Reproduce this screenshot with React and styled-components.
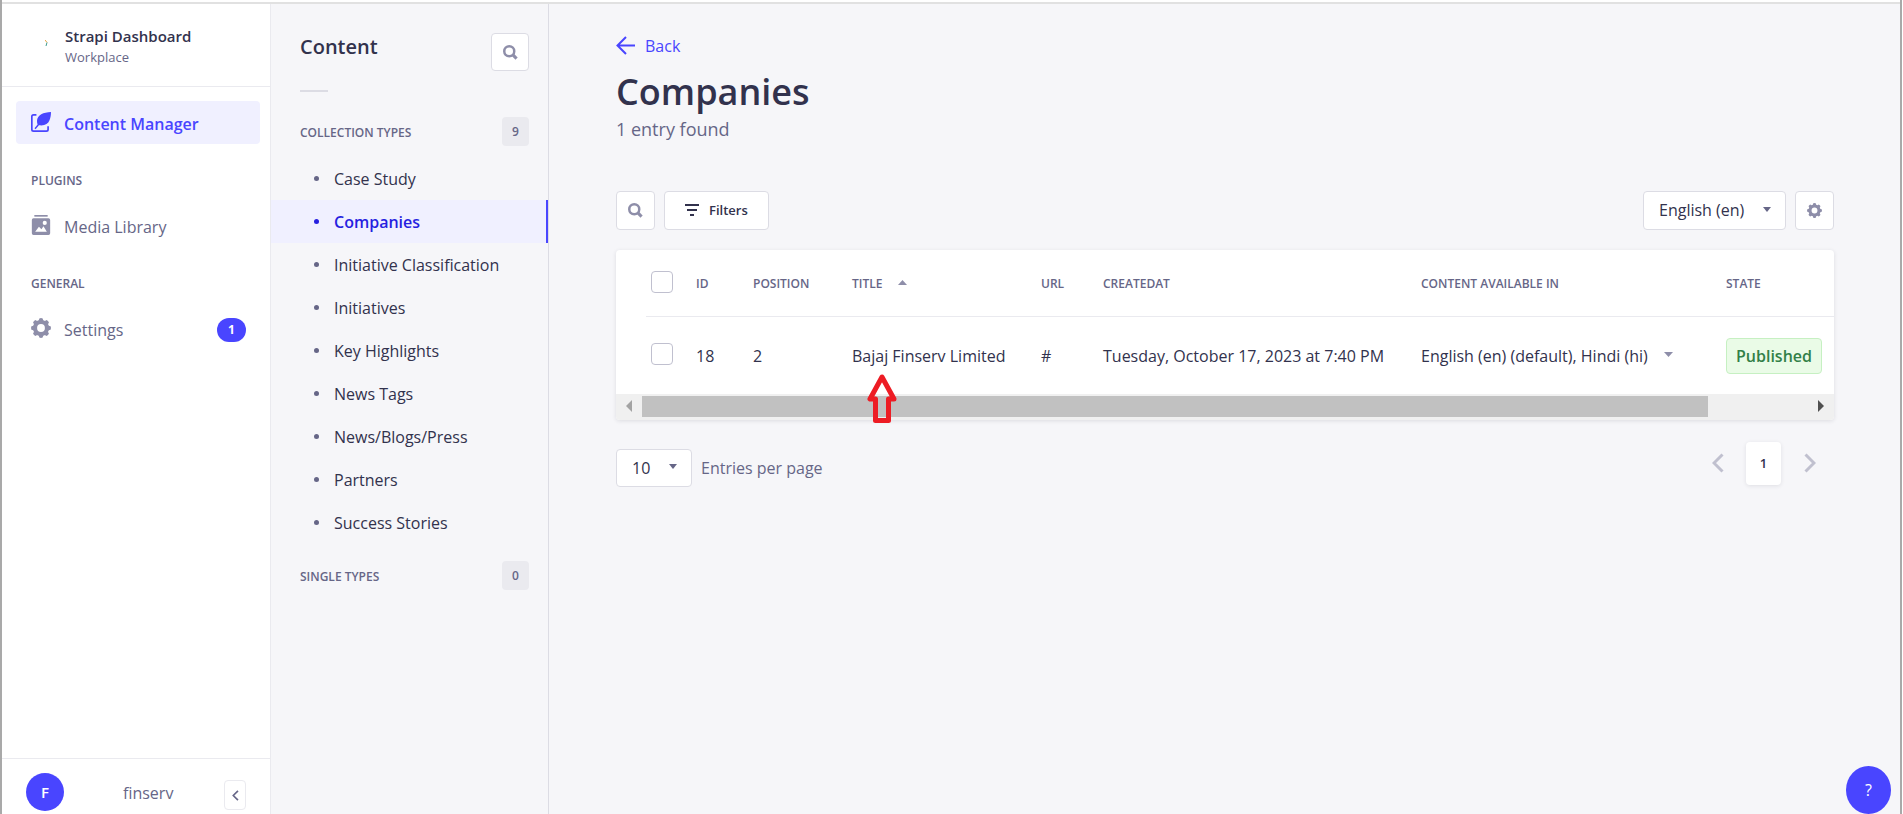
import React, { useRef } from 'react';
import styled, { createGlobalStyle } from 'styled-components';

const c = {
  primary: '#4945ff',
  primaryDark: '#271fe0',
  primaryLight: '#f0f0ff',
  ink: '#32324d',
  muted: '#666687',
  icon: '#8e8ea9',
  faint: '#c0c0cf',
  line: '#eaeaef',
  border: '#dcdce4',
  page: '#f6f6f9',
};

const GlobalStyle = createGlobalStyle`
  *, *::before, *::after { box-sizing: border-box; }
  body { margin: 0; background: #fff; }
  body, button, select, input {
    font-family: "Open Sans", "Noto Sans", sans-serif;
    font-size: 16px;
    color: ${c.ink};
  }
  h1, h2, h3, p, ul { margin: 0; padding: 0; }
  ul { list-style: none; }
  a { color: inherit; text-decoration: none; }
  button { cursor: pointer; padding: 0; }
  svg { display: block; flex: none; }
`;

const Window = styled.div`
  display: flex;
  min-height: 100vh;
  margin-right: 1px;
  padding-top: 2px;
  border-left: 2px solid #a9a9a9;
  border-right: 2px solid #a9a9a9;
`;

const Frame = styled.div`
  display: flex;
  flex: 1;
  min-width: 0;
  border-top: 2px solid #e1e1e1;
  background: ${c.page};
`;

/* Main navigation */

const Sidebar = styled.nav`
  display: flex;
  flex-direction: column;
  flex: none;
  width: 269px;
  background: #fff;
  border-right: 1px solid ${c.line};
`;

const Brand = styled.div`
  display: flex;
  gap: 17px;
  height: 83px;
  padding: 20px 16px 0 43px;
  border-bottom: 1px solid ${c.line};
`;

const BrandMark = styled.svg`
  margin-top: 16px;
`;

const BrandName = styled.p`
  font-size: 15px;
  font-weight: 600;
  line-height: 24px;
`;

const BrandPlace = styled.p`
  font-size: 13px;
  line-height: 18px;
  color: ${c.muted};
`;

const NavBody = styled.div`
  flex: 1;
  padding: 14px 10px 0 14px;
`;

const NavLabel = styled.h3`
  margin: 27px 0 13px;
  padding-left: 15px;
  font-size: 12px;
  font-weight: 600;
  line-height: 20px;
  text-transform: uppercase;
  color: ${c.muted};
`;

const NavLink = styled.a`
  display: flex;
  align-items: center;
  gap: 13px;
  height: 43px;
  padding: 2px 14px 0 15px;
  border-radius: 4px;
  font-weight: ${(p) => (p.$active ? 600 : 400)};
  color: ${(p) => (p.$active ? c.primary : c.muted)};
  background: ${(p) => (p.$active ? c.primaryLight : 'transparent')};

  svg { color: ${(p) => (p.$active ? c.primary : c.icon)}; margin-bottom: 4px; }
`;

const NavCount = styled.span`
  display: grid;
  place-items: center;
  width: 29px;
  height: 24px;
  margin-left: auto;
  border-radius: 12px;
  font-size: 12px;
  font-weight: 700;
  color: #fff;
  background: ${c.primary};
`;

const Account = styled.div`
  display: flex;
  height: 56px;
  padding: 14px 24px 0;
  border-top: 1px solid ${c.line};
`;

const Avatar = styled.span`
  display: grid;
  place-items: center;
  width: 38px;
  height: 38px;
  border-radius: 50%;
  font-size: 15px;
  font-weight: 600;
  color: #fff;
  background: ${c.primary};
`;

const AccountName = styled.span`
  flex: 1;
  padding-left: 59px;
  line-height: 40px;
  color: ${c.muted};
`;

const CollapseButton = styled.button`
  display: grid;
  place-items: center;
  width: 22px;
  height: 30px;
  margin-top: 7px;
  border: 1px solid ${c.line};
  border-radius: 4px;
  background: #fff;
  color: ${c.muted};
`;

/* Content types column */

const TypesPanel = styled.nav`
  flex: none;
  width: 278px;
  border-right: 1px solid ${c.border};
`;

const TypesHeader = styled.div`
  display: flex;
  justify-content: space-between;
  padding: 29px 19px 0 29px;
`;

const TypesTitle = styled.h2`
  font-size: 20px;
  font-weight: 600;
  line-height: 28px;
`;

const ShortRule = styled.div`
  width: 28px;
  height: 2px;
  margin: 19px 0 25px 29px;
  background: ${c.border};
`;

const GroupHeader = styled.div`
  display: flex;
  align-items: center;
  justify-content: space-between;
  height: 29px;
  padding: 0 19px 0 29px;
`;

const GroupTitle = styled.h3`
  padding-top: 2px;
  font-size: 12px;
  font-weight: 600;
  text-transform: uppercase;
  color: ${c.muted};
`;

const GroupCount = styled.span`
  display: grid;
  place-items: center;
  width: 27px;
  height: 29px;
  border-radius: 4px;
  font-size: 12px;
  font-weight: 600;
  color: ${c.muted};
  background: ${c.line};
`;

const TypeList = styled.ul`
  padding: 11px 0 17px;
`;

const TypeLink = styled.a`
  display: flex;
  align-items: center;
  gap: 15px;
  height: 43px;
  padding-left: 43px;
  font-weight: ${(p) => (p.$active ? 600 : 400)};
  color: ${(p) => (p.$active ? c.primaryDark : c.ink)};
  background: ${(p) => (p.$active ? c.primaryLight : 'transparent')};
  border-right: 2px solid ${(p) => (p.$active ? c.primary : 'transparent')};

  &::before {
    content: '';
    width: 5px;
    height: 5px;
    border-radius: 50%;
    background: ${(p) => (p.$active ? c.primaryDark : c.muted)};
  }
`;

/* List view */

const Main = styled.main`
  flex: 1;
  min-width: 0;
  padding: 30px 66px 30px 67px;
`;

const BackLink = styled.a`
  display: inline-flex;
  align-items: center;
  gap: 10px;
  height: 24px;
  font-size: 16px;
  line-height: 24px;
  color: ${c.primary};

  svg { margin-bottom: 2px; }
`;

const PageTitle = styled.h1`
  margin-top: 9px;
  font-size: 36px;
  font-weight: 600;
  line-height: 46px;
`;

const PageSubtitle = styled.p`
  margin-top: 1px;
  font-size: 18px;
  line-height: 26px;
  color: ${c.muted};
`;

const Toolbar = styled.div`
  display: flex;
  gap: 9px;
  margin-top: 49px;
`;

const Spacer = styled.div`
  flex: 1;
`;

const IconButton = styled.button`
  display: grid;
  place-items: center;
  width: ${(p) => p.$size || 39}px;
  height: ${(p) => p.$size || 39}px;
  border: 1px solid ${c.border};
  border-radius: 4px;
  background: #fff;
  color: ${c.icon};
`;

const FilterButton = styled.button`
  display: flex;
  align-items: center;
  gap: 10px;
  height: 39px;
  padding: 0 20px;
  border: 1px solid ${c.border};
  border-radius: 4px;
  background: #fff;
  font-size: 13px;
  font-weight: 600;
`;

const SelectBox = styled.div`
  display: grid;
  align-items: center;
  width: ${(p) => p.$width}px;
  height: ${(p) => p.$height}px;

  > * { grid-area: 1 / 1; }
  svg { justify-self: end; margin: 0 15px 2px 0; color: ${c.muted}; pointer-events: none; }
`;

const Select = styled.select`
  appearance: none;
  width: 100%;
  height: 100%;
  padding: 0 0 0 15px;
  border: 1px solid ${c.border};
  border-radius: 4px;
  background: #fff;
`;

const Card = styled.section`
  margin: 20px 0 22px;
  border-radius: 4px;
  background: #fff;
  box-shadow: 0 1px 4px rgba(33, 33, 52, 0.12);
  overflow: hidden;
`;

const TableScroll = styled.div`
  padding-left: 30px;
  overflow-x: auto;
  scrollbar-width: none;
`;

const Table = styled.table`
  width: 1300px;
  table-layout: fixed;
  border-collapse: collapse;
`;

const Col = styled.col`
  width: ${(p) => p.$w}px;
`;

const Th = styled.th`
  height: 67px;
  padding: 2px 0 0 5px;
  border-bottom: 1px solid ${c.line};
  font-size: 12px;
  font-weight: 600;
  text-align: left;
  text-transform: uppercase;
  white-space: nowrap;
  color: ${c.muted};
`;

const Td = styled.td`
  height: 77px;
  padding: 2px 0 0 5px;
  white-space: nowrap;
`;

const Inline = styled.span`
  display: flex;
  align-items: center;
  gap: 16px;

  svg { color: ${c.icon}; margin-bottom: 3px; }
`;

const Checkbox = styled.input`
  appearance: none;
  display: block;
  width: 22px;
  height: 22px;
  margin: 0 0 4px;
  border: 1px solid ${c.faint};
  border-radius: 4px;
  background: #fff;

  &:checked { background: ${c.primary}; border-color: ${c.primary}; }
`;

const Status = styled.span`
  display: inline-block;
  width: 96px;
  padding: 5px 0;
  border: 1px solid #c6f0c2;
  border-radius: 4px;
  background: #eafbe7;
  color: #328048;
  font-weight: 600;
  line-height: 24px;
  text-align: center;
`;

const CardBody = styled.div`
  position: relative;
`;

const CalloutArrow = styled.svg`
  position: absolute;
  left: 251px;
  top: 124px;
  pointer-events: none;
`;

const ScrollTrack = styled.div`
  display: flex;
  height: 26px;
  padding: 2px 0 3px;
  background: #f0f0f0;
`;

const ScrollButton = styled.button`
  display: grid;
  place-items: center;
  width: 26px;
  border: 0;
  background: none;
  color: ${(p) => (p.$dim ? '#a3a3a3' : '#505050')};
`;

const ScrollRail = styled.div`
  flex: 1;
`;

const ScrollThumb = styled.div`
  width: 91.4%;
  height: 100%;
  background: #c1c1c1;
`;

const Footer = styled.footer`
  display: flex;
  justify-content: space-between;
`;

const PageSize = styled.label`
  display: flex;
  align-items: center;
  gap: 9px;
  padding-top: 7px;
  height: 45px;
  color: ${c.muted};
`;

const Pagination = styled.div`
  display: flex;
  align-items: center;
  gap: 20px;
  height: 43px;
  padding-right: 16px;
`;

const PageArrow = styled.button`
  display: grid;
  place-items: center;
  width: 17px;
  height: 24px;
  border: 0;
  background: none;
  color: ${c.faint};
`;

const PageNumber = styled.button`
  width: 35px;
  height: 43px;
  border: 0;
  border-radius: 4px;
  background: #fff;
  box-shadow: 0 1px 4px rgba(33, 33, 52, 0.1);
  font-size: 13px;
  font-weight: 600;
`;

const HelpButton = styled.button`
  position: fixed;
  right: 12px;
  bottom: 0;
  width: 45px;
  height: 48px;
  border: 0;
  border-radius: 50%;
  background: ${c.primary};
  color: #fff;
`;

/* Icons */

const SearchIcon = () => (
  <svg width="15" height="15" viewBox="0 0 24 24" fill="none" stroke="currentColor" aria-hidden="true">
    <circle cx="10" cy="10" r="8" strokeWidth="4" />
    <path d="M15.5 15.5l6.2 6.2" strokeWidth="5" />
  </svg>
);

const CogIcon = ({ size = 20 }) => (
  <svg width={size} height={size} viewBox="0 0 24 24" aria-hidden="true">
    <circle cx="12" cy="12" r="7.2" fill="none" stroke="currentColor" strokeWidth="5" />
    {[0, 45, 90, 135, 180, 225, 270, 315].map((a) => (
      <path key={a} d="M9 4l1-3.500q2-.8 4 0L15 4z" fill="currentColor" transform={`rotate(${a} 12 12)`} />
    ))}
  </svg>
);

const FeatherIcon = () => (
  <svg width="20" height="20" viewBox="0 0 24 24" aria-hidden="true">
    <path d="M6.5 3.5H3Q1 3.5 1 5.500V21q0 2 2 2h15.500q2 0 2-2v-4" fill="none" stroke="currentColor" strokeWidth="2" />
    <path d="M24 0C15 .4 7.600 3.400 7.200 10.500c0 1.800.2 3.200.7 4.600L4.200 19.600l1.300 1.100 4-4.700c6.800.9 11-1.500 12.700-6C23.500 6.800 24 3.500 24 0z" fill="currentColor" />
  </svg>
);

const MediaIcon = () => (
  <svg width="20" height="20" viewBox="0 0 24 24" aria-hidden="true">
    <path d="M4 0h16v2H4z" fill="currentColor" />
    <path
      fillRule="evenodd"
      d="M3 4h18q2 0 2 2v16q0 2-2 2H3q-2 0-2-2V6q0-2 2-2zM5 20h14l-4-6.500-2.500 3.500L9.500 14zM16.500 7a2.500 2.500 0 100 5 2.500 2.500 0 000-5z"
      fill="currentColor"
    />
  </svg>
);

const FilterIcon = () => (
  <svg width="14" height="12" viewBox="0 0 14 12" fill="none" stroke="currentColor" strokeWidth="2" aria-hidden="true">
    <path d="M0 1h14M2 6h10M5 11h4" />
  </svg>
);

const BackIcon = () => (
  <svg width="19" height="19" viewBox="0 0 19 19" fill="none" stroke="currentColor" strokeWidth="2" aria-hidden="true">
    <path d="M19 9.500H1.500M10 1L1.500 9.500 10 18" />
  </svg>
);

const Caret = ({ up, width = 8 }) => (
  <svg width={width} height="5" viewBox="0 0 8 5" preserveAspectRatio="none" aria-hidden="true">
    <path d={up ? 'M0 5L4 0l4 5z' : 'M0 0h8L4 5z'} fill="currentColor" />
  </svg>
);

const Chevron = ({ right, width = 12, height = 20 }) => (
  <svg width={width} height={height} viewBox="0 0 12 20" fill="none" stroke="currentColor" strokeWidth="3" aria-hidden="true">
    <path d={right ? 'M1.500 1.500L10 10l-8.500 8.500' : 'M10.500 1.500L2 10l8.500 8.500'} />
  </svg>
);

const ScrollArrow = ({ right }) => (
  <svg width="6" height="12" viewBox="0 0 6 12" aria-hidden="true">
    <path d={right ? 'M0 0l6 6-6 6z' : 'M6 0L0 6l6 6z'} fill="currentColor" />
  </svg>
);

const types = [
  'Case Study',
  'Companies',
  'Initiative Classification',
  'Initiatives',
  'Key Highlights',
  'News Tags',
  'News/Blogs/Press',
  'Partners',
  'Success Stories',
];

const columnWidths = [45, 57, 99, 189, 62, 318, 305, 130, 95];

export default function App() {
  const scroller = useRef(null);
  const scrollBy = (left) => scroller.current.scrollBy({ left });

  return (
    <>
      <GlobalStyle />
      <Window>
        <Frame>
          <Sidebar aria-label="Main">
            <Brand>
              <BrandMark width="3" height="6" viewBox="0 0 3 6" aria-hidden="true">
                <path d="M0 0l2 2.500" stroke="#e8a33d" fill="none" />
                <path d="M2 2.500L1 6" stroke="#3f9b8f" fill="none" />
              </BrandMark>
              <div>
                <BrandName>Strapi Dashboard</BrandName>
                <BrandPlace>Workplace</BrandPlace>
              </div>
            </Brand>
            <NavBody>
              <NavLink href="#content" $active>
                <FeatherIcon />
                Content Manager
              </NavLink>
              <NavLabel>Plugins</NavLabel>
              <NavLink href="#media">
                <MediaIcon />
                Media Library
              </NavLink>
              <NavLabel>General</NavLabel>
              <NavLink href="#settings">
                <CogIcon />
                Settings
                <NavCount>1</NavCount>
              </NavLink>
            </NavBody>
            <Account>
              <Avatar>F</Avatar>
              <AccountName>finserv</AccountName>
              <CollapseButton aria-label="Collapse the navigation">
                <Chevron width={7} height={11} />
              </CollapseButton>
            </Account>
          </Sidebar>

          <TypesPanel aria-label="Content">
            <TypesHeader>
              <TypesTitle>Content</TypesTitle>
              <IconButton $size={38} aria-label="Search content types">
                <SearchIcon />
              </IconButton>
            </TypesHeader>
            <ShortRule />
            <GroupHeader>
              <GroupTitle>Collection Types</GroupTitle>
              <GroupCount>9</GroupCount>
            </GroupHeader>
            <TypeList>
              {types.map((name) => (
                <li key={name}>
                  <TypeLink href="#type" $active={name === 'Companies'}>
                    {name}
                  </TypeLink>
                </li>
              ))}
            </TypeList>
            <GroupHeader>
              <GroupTitle>Single Types</GroupTitle>
              <GroupCount>0</GroupCount>
            </GroupHeader>
          </TypesPanel>

          <Main>
            <BackLink href="#back">
              <BackIcon />
              Back
            </BackLink>
            <PageTitle>Companies</PageTitle>
            <PageSubtitle>1 entry found</PageSubtitle>

            <Toolbar>
              <IconButton aria-label="Search entries">
                <SearchIcon />
              </IconButton>
              <FilterButton>
                <FilterIcon />
                Filters
              </FilterButton>
              <Spacer />
              <SelectBox $width={143} $height={39}>
                <Select aria-label="Locale" defaultValue="en">
                  <option value="en">English (en)</option>
                </Select>
                <Caret />
              </SelectBox>
              <IconButton aria-label="Configure the view">
                <CogIcon size={15} />
              </IconButton>
            </Toolbar>

            <CardBody>
              <Card>
                <TableScroll ref={scroller}>
                  <Table>
                    <colgroup>
                      {columnWidths.map((w, i) => (
                        <Col key={i} $w={w} />
                      ))}
                    </colgroup>
                    <thead>
                      <tr>
                        <Th>
                          <Checkbox type="checkbox" aria-label="Select all entries" />
                        </Th>
                        <Th>Id</Th>
                        <Th>Position</Th>
                        <Th>
                          <Inline>
                            Title
                            <Caret up width={9} />
                          </Inline>
                        </Th>
                        <Th>Url</Th>
                        <Th>createdAt</Th>
                        <Th>Content available in</Th>
                        <Th>State</Th>
                        <Th />
                      </tr>
                    </thead>
                    <tbody>
                      <tr>
                        <Td>
                          <Checkbox type="checkbox" aria-label="Select entry 18" />
                        </Td>
                        <Td>18</Td>
                        <Td>2</Td>
                        <Td>Bajaj Finserv Limited</Td>
                        <Td>#</Td>
                        <Td>Tuesday, October 17, 2023 at 7:40 PM</Td>
                        <Td>
                          <Inline>
                            English (en) (default), Hindi (hi)
                            <Caret width={9} />
                          </Inline>
                        </Td>
                        <Td>
                          <Status>Published</Status>
                        </Td>
                        <Td />
                      </tr>
                    </tbody>
                  </Table>
                </TableScroll>
                <ScrollTrack>
                  <ScrollButton $dim aria-label="Scroll left" onClick={() => scrollBy(-80)}>
                    <ScrollArrow />
                  </ScrollButton>
                  <ScrollRail>
                    <ScrollThumb />
                  </ScrollRail>
                  <ScrollButton aria-label="Scroll right" onClick={() => scrollBy(80)}>
                    <ScrollArrow right />
                  </ScrollButton>
                </ScrollTrack>
              </Card>
              <CalloutArrow width="30" height="50" viewBox="0 0 30 50" aria-hidden="true">
                <path d="M15 3L3 25h5.500v21.500h13V25H27z" fill="none" stroke="#ed1c24" strokeWidth="5" strokeLinejoin="round" />
              </CalloutArrow>
            </CardBody>

            <Footer>
              <PageSize>
                <SelectBox $width={76} $height={38}>
                  <Select defaultValue="10">
                    <option value="10">10</option>
                  </Select>
                  <Caret />
                </SelectBox>
                Entries per page
              </PageSize>
              <Pagination>
                <PageArrow aria-label="Previous page">
                  <Chevron />
                </PageArrow>
                <PageNumber>1</PageNumber>
                <PageArrow aria-label="Next page">
                  <Chevron right />
                </PageArrow>
              </Pagination>
            </Footer>
          </Main>
        </Frame>
      </Window>
      <HelpButton aria-label="Help">?</HelpButton>
    </>
  );
}
